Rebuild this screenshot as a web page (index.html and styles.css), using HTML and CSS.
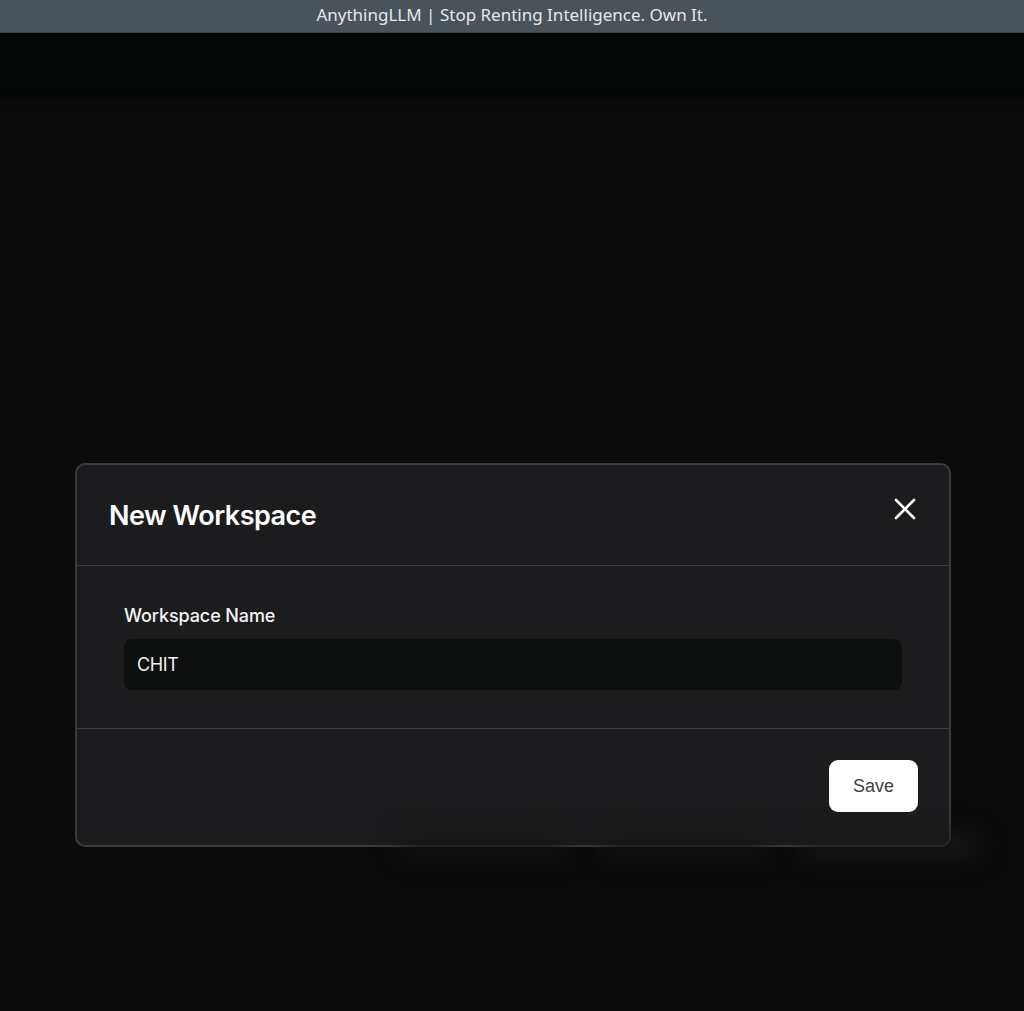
FILE: index.html
```html
<!DOCTYPE html>
<html lang="en">
<head>
<meta charset="utf-8">
<title>AnythingLLM | Stop Renting Intelligence. Own It.</title>
<link rel="stylesheet" href="styles.css">
</head>
<body>
<div class="titlebar">AnythingLLM | Stop Renting Intelligence. Own It.</div>
<div class="stage">
  <div class="behind">
    <div class="topband"></div>
    <div class="blobs">
      <div class="blob b1"></div>
      <div class="blob b2"></div>
      <div class="blob b3"></div>
    </div>
  </div>
  <div class="overlay">
    <div class="modal">
      <div class="modal-header">
        <h3 class="modal-title">New Workspace</h3>
        <button class="close-btn" aria-label="Close">
          <svg width="22" height="22" viewBox="0 0 22 22" fill="none" stroke="currentColor" stroke-width="2.6" stroke-linecap="round"><path d="M2 2L20 20M20 2L2 20"/></svg>
        </button>
      </div>
      <div class="modal-body">
        <label class="field-label">Workspace Name</label>
        <div class="field-input">CHIT</div>
      </div>
      <div class="modal-footer">
        <button class="save-btn">Save</button>
      </div>
    </div>
  </div>
</div>
</body>
</html>
```

FILE: styles.css
```css
html, body {
  margin: 0;
  padding: 0;
  height: 100%;
  background: #0b0b0b;
  overflow: hidden;
}
.titlebar {
  box-sizing: border-box;
  height: 33px;
  background: #4a525a;
  border-bottom: 1px solid #3c4248;
  color: #e6e8ea;
  font-family: "Noto Sans", "Open Sans", sans-serif;
  font-size: 17px;
  line-height: 30px;
  text-align: center;
}
.stage {
  display: grid;
  height: 978px;
}
.behind, .overlay {
  grid-area: 1 / 1;
}
.behind {
  display: flex;
  flex-direction: column;
}
.topband {
  height: 74px;
  background: linear-gradient(#050707, #040505 85%, #0b0b0b);
}
.blobs {
  display: flex;
  gap: 30px;
  padding: 728px 0 0 400px;
}
.blob {
  height: 20px;
  border-radius: 12px;
  background: #141414;
  filter: blur(12px);
}
.b1 { width: 170px; }
.b2 { width: 170px; }
.b3 { width: 180px; background: #191919; }
.overlay {
  display: flex;
  align-items: flex-start;
  padding: 430px 0 0 75px;
}
.modal {
  width: 876px;
  box-sizing: border-box;
  background: #1c1c1e;
  border: 2px solid #3b3b3e;
  border-radius: 10px;
  font-family: Inter, "Noto Sans", sans-serif;
}
.modal-header {
  display: flex;
  justify-content: space-between;
  align-items: flex-start;
  height: 101px;
  box-sizing: border-box;
  padding: 32px 33px 0 32px;
  border-bottom: 1px solid #3e3e41;
}
.modal-title {
  margin: 0;
  color: #ffffff;
  font-size: 27px;
  font-weight: 600;
  letter-spacing: -0.5px;
  line-height: 38px;
}
.close-btn {
  background: none;
  border: none;
  padding: 0;
  margin: 1px 0 0 0;
  color: #ffffff;
  width: 22px;
  height: 22px;
  display: flex;
}
.modal-body {
  display: flex;
  flex-direction: column;
  padding: 37px 47px 38px 47px;
  border-bottom: 1px solid #3e3e41;
}
.field-label {
  color: #f4f4f5;
  font-size: 18px;
  font-weight: 500;
  letter-spacing: -0.1px;
  line-height: 26px;
  margin-bottom: 10px;
}
.field-input {
  background: #0e0f0f;
  border-radius: 8px;
  height: 51px;
  box-sizing: border-box;
  padding: 0 13px;
  display: flex;
  align-items: center;
  color: #f0f0f0;
  font-size: 18px;
  letter-spacing: -0.4px;
}
.modal-footer {
  display: flex;
  justify-content: flex-end;
  padding: 31px 31px 33px 31px;
}
.save-btn {
  background: #ffffff;
  border: none;
  border-radius: 9px;
  width: 89px;
  height: 52px;
  color: #3f3f46;
  font-family: "Liberation Sans", Arial, sans-serif;
  font-size: 18px;
  padding: 0;
}
```
